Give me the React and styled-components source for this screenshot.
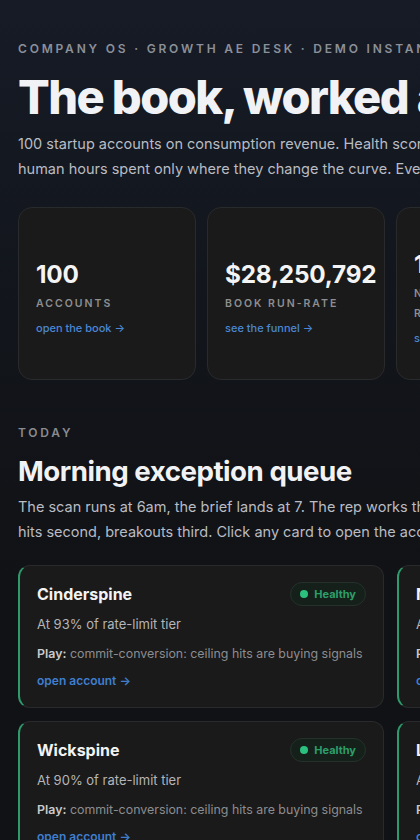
import React from "react";
import styled, { createGlobalStyle } from "styled-components";

const GlobalStyle = createGlobalStyle`
  html, body {
    margin: 0;
    padding: 0;
    background: #111215;
    overflow: hidden;
  }
  body {
    font-family: Inter, "Noto Sans", "Liberation Sans", sans-serif;
    -webkit-font-smoothing: antialiased;
  }
`;

const stats = [
  { value: "100", label: "Accounts", link: "open the book" },
  { value: "$28,250,792", label: "Book run-rate", link: "see the funnel" },
  { value: "14", label: "Need a human review", link: "see the queue" },
  { value: "31", label: "Ceiling hits", link: "see the plays" },
  { value: "9", label: "At risk", link: "see the risks" },
  { value: "6", label: "Breakouts", link: "see the breakouts" },
];

const accounts = [
  {
    name: "Cinderspine",
    signal: "At 93% of rate-limit tier",
    play: "commit-conversion: ceiling hits are buying signals",
  },
  {
    name: "Nimbleforge",
    signal: "At 92% of rate-limit tier",
    play: "commit-conversion: ceiling hits are buying signals",
  },
  {
    name: "Quillharbor",
    signal: "At 91% of rate-limit tier",
    play: "commit-conversion: ceiling hits are buying signals",
  },
  {
    name: "Wickspine",
    signal: "At 90% of rate-limit tier",
    play: "commit-conversion: ceiling hits are buying signals",
  },
  {
    name: "Loomvault",
    signal: "At 89% of rate-limit tier",
    play: "commit-conversion: ceiling hits are buying signals",
  },
  {
    name: "Brightmoor",
    signal: "At 88% of rate-limit tier",
    play: "commit-conversion: ceiling hits are buying signals",
  },
];

const App = () => {
  return (
    <Page>
      <GlobalStyle />
      <Inner>
        <Eyebrow>Company OS · Growth AE Desk · Demo Instance</Eyebrow>
        <Title>The book, worked autonomously.</Title>
        <Lead>
          100 startup accounts on consumption revenue. Health scores, plays and
          briefs run on their own, with
          <br />
          human hours spent only where they change the curve. Every number here
          is live demo data.
        </Lead>

        <StatGrid>
          {stats.map((s) => (
            <StatCard key={s.label}>
              <StatValue>{s.value}</StatValue>
              <StatLabel>{s.label}</StatLabel>
              <StatLink>{s.link} →</StatLink>
            </StatCard>
          ))}
        </StatGrid>

        <Section>
          <Kicker>Today</Kicker>
          <SectionTitle>Morning exception queue</SectionTitle>
          <Lead>
            The scan runs at 6am, the brief lands at 7. The rep works the queue
            top-down: risk first, ceiling
            <br />
            hits second, breakouts third. Click any card to open the account.
          </Lead>

          <AccountGrid>
            {accounts.map((a) => (
              <AccountCard key={a.name}>
                <CardHead>
                  <AccountName>{a.name}</AccountName>
                  <Badge>
                    <Dot />
                    Healthy
                  </Badge>
                </CardHead>
                <Signal>{a.signal}</Signal>
                <Play>
                  <b>Play:</b> {a.play}
                </Play>
                <CardLink>open account →</CardLink>
              </AccountCard>
            ))}
          </AccountGrid>
        </Section>
      </Inner>
    </Page>
  );
};

export default App;

const Page = styled.div`
  width: 100%;
  min-height: 100vh;
  background: linear-gradient(180deg, #161b26 0%, #12151b 320px, #111215 600px);
  overflow: hidden;
`;

const Inner = styled.div`
  width: 1124px;
  padding: 40px 18px 40px;
`;

const Eyebrow = styled.div`
  font-size: 12px;
  font-weight: 600;
  letter-spacing: 2.8px;
  text-transform: uppercase;
  color: #8b9099;
  line-height: 18px;
`;

const Title = styled.h1`
  margin: 11px 0 0;
  font-size: 47px;
  font-weight: 800;
  letter-spacing: -1.6px;
  line-height: 56px;
  color: #f1f2f5;
  white-space: nowrap;
`;

const Lead = styled.p`
  margin: 6px 0 0;
  font-size: 14.5px;
  line-height: 25px;
  color: #b9bcc3;
  white-space: nowrap;
`;

const StatGrid = styled.div`
  display: grid;
  grid-template-columns: repeat(6, 178px);
  gap: 11px;
  margin-top: 26px;
`;

const StatCard = styled.div`
  min-height: 173px;
  box-sizing: border-box;
  padding: 27px 17px 20px;
  background: #1a1a1a;
  border: 1px solid #282a2c;
  border-radius: 14px;
  display: flex;
  flex-direction: column;
  justify-content: center;
`;

const StatValue = styled.div`
  font-size: 24.3px;
  font-weight: 700;
  color: #f4f4f5;
  line-height: 30px;
  letter-spacing: -0.2px;
`;

const StatLabel = styled.div`
  margin-top: 5px;
  font-size: 10.5px;
  font-weight: 600;
  letter-spacing: 2px;
  text-transform: uppercase;
  color: #8e8e90;
  line-height: 20px;
`;

const StatLink = styled.div`
  margin-top: 6px;
  font-size: 11px;
  font-weight: 500;
  color: #4a87d4;
  line-height: 16px;
`;

const Section = styled.section`
  margin-top: 44px;
`;

const Kicker = styled(Eyebrow)`
  color: #8a8b8e;
`;

const SectionTitle = styled.h2`
  margin: 12px 0 0;
  font-size: 27.7px;
  font-weight: 700;
  letter-spacing: -0.5px;
  line-height: 34px;
  color: #f1f2f4;
`;

const AccountGrid = styled.div`
  display: grid;
  grid-template-columns: repeat(3, 366px);
  gap: 13px;
  margin-top: 21px;
`;

const AccountCard = styled.div`
  box-sizing: border-box;
  min-height: 143px;
  padding: 16px 17px 16px 17px;
  background: #1a1a1a;
  border: 1px solid #292a2c;
  border-left: 2px solid #2f9b6c;
  border-radius: 12px;
  display: flex;
  flex-direction: column;
`;

const CardHead = styled.div`
  display: flex;
  align-items: center;
  justify-content: space-between;
`;

const AccountName = styled.div`
  font-size: 16px;
  font-weight: 700;
  color: #f3f3f4;
`;

const Badge = styled.span`
  display: inline-flex;
  align-items: center;
  gap: 6px;
  height: 24px;
  padding: 0 9px 0 9px;
  box-sizing: border-box;
  border-radius: 12px;
  background: #16201b;
  border: 1px solid #24322b;
  font-size: 11px;
  font-weight: 700;
  color: #2c9e69;
`;

const Dot = styled.span`
  width: 8px;
  height: 8px;
  border-radius: 50%;
  background: #2cc07f;
`;

const Signal = styled.div`
  margin-top: 8px;
  font-size: 13px;
  color: #b4b5b8;
  line-height: 20px;
`;

const Play = styled.div`
  margin-top: 11px;
  font-size: 12.4px;
  color: #8c8d90;
  line-height: 18px;
  white-space: nowrap;

  b {
    font-weight: 600;
    color: #c9cacc;
  }
`;

const CardLink = styled.div`
  margin-top: 10px;
  font-size: 12px;
  font-weight: 600;
  color: #3f7ecf;
  line-height: 16px;
`;
